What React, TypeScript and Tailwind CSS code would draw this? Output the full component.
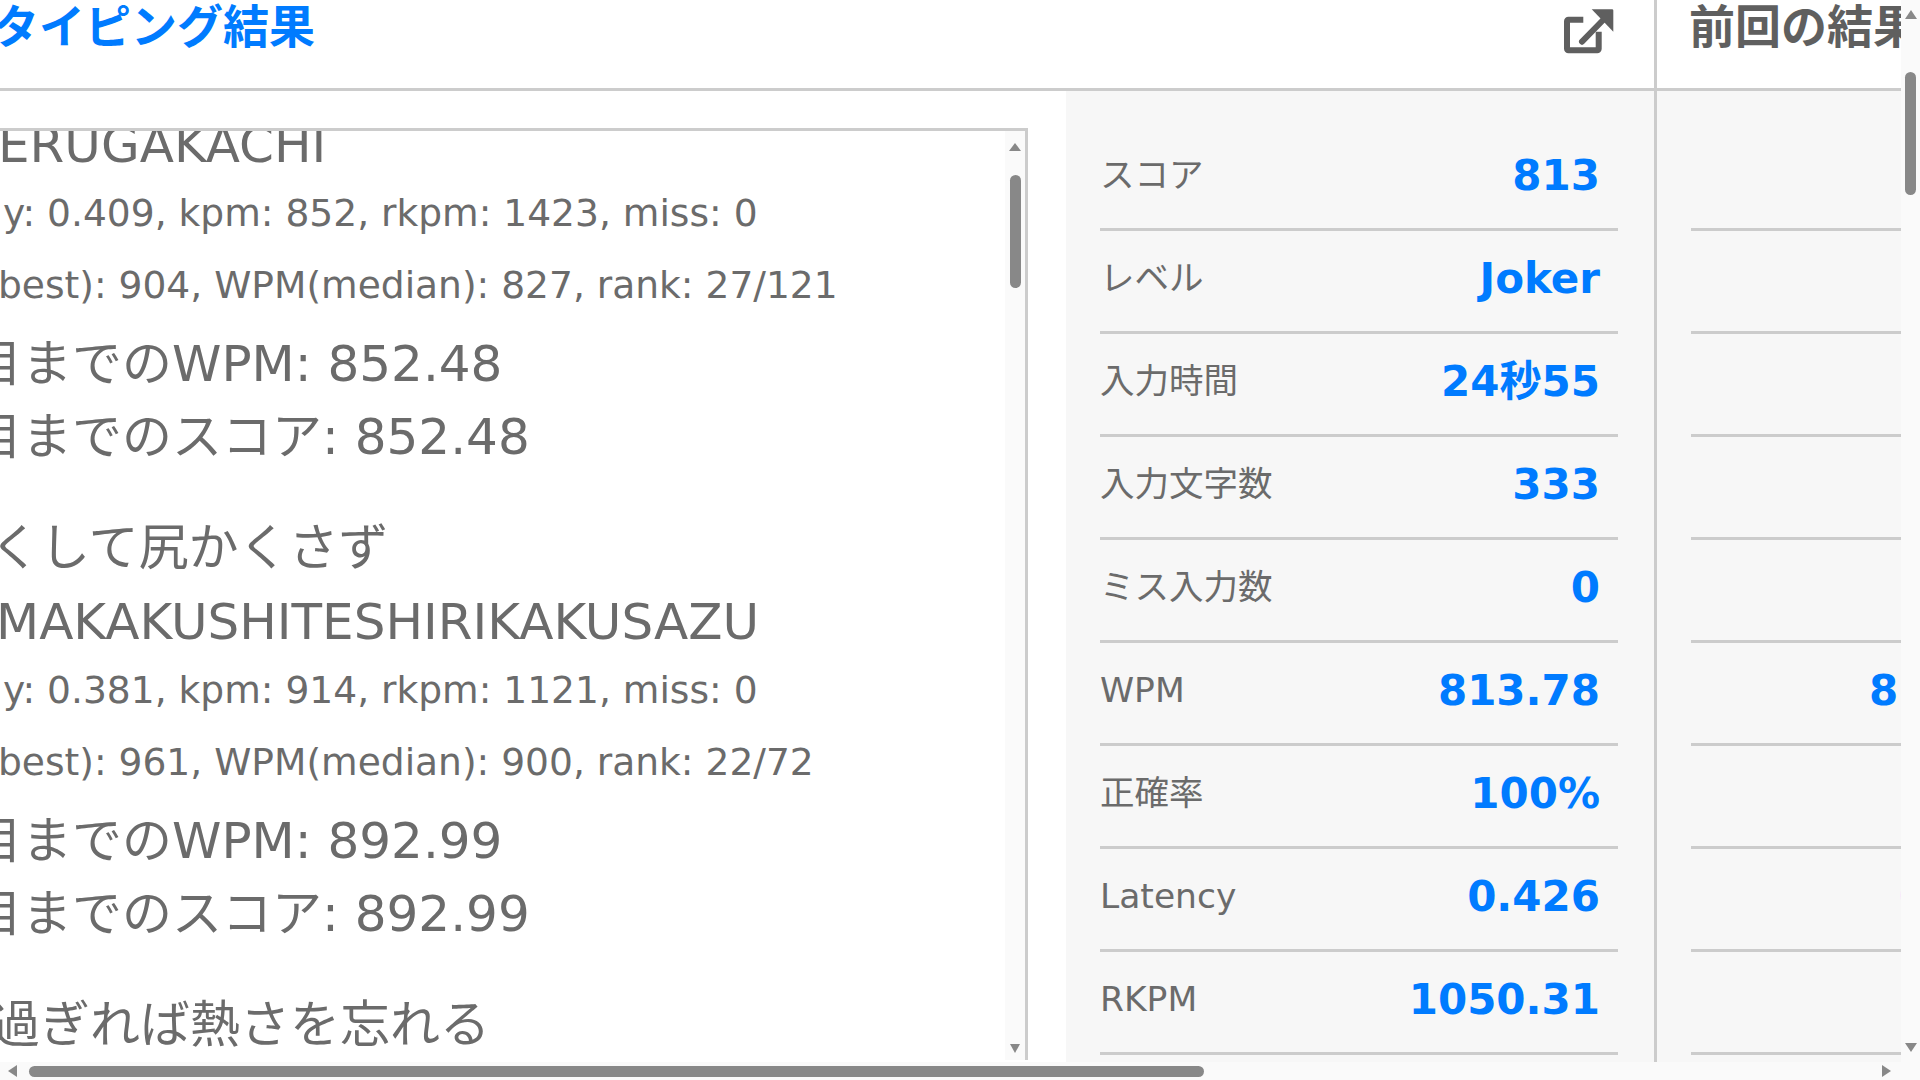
const jp = "font-['DejaVu_Sans','Noto_Sans_CJK_JP',sans-serif]"

const blocks = [
  {
    kana: '',
    roman: 'ERUGAKACHI',
    stat: 'y: 0.409, kpm: 852, rkpm: 1423, miss: 0',
    best: 'best): 904, WPM(median): 827, rank: 27/121',
    wpm: '目までのWPM: 852.48',
    score: '目までのスコア: 852.48',
  },
  {
    kana: 'くして尻かくさず',
    roman: 'MAKAKUSHITESHIRIKAKUSAZU',
    stat: 'y: 0.381, kpm: 914, rkpm: 1121, miss: 0',
    best: 'best): 961, WPM(median): 900, rank: 22/72',
    wpm: '目までのWPM: 892.99',
    score: '目までのスコア: 892.99',
  },
]

const stats = [
  ['スコア', '813'],
  ['レベル', 'Joker'],
  ['入力時間', '24秒55'],
  ['入力文字数', '333'],
  ['ミス入力数', '0'],
  ['WPM', '813.78'],
  ['正確率', '100%'],
  ['Latency', '0.426'],
  ['RKPM', '1050.31'],
]

function ExternalIcon() {
  return (
    <svg width="52" height="46" viewBox="0 0 52 46" fill="none" className="text-[#5f5f5f]">
      <path d="M19.300 10.700H4.500a1.500 1.500 0 0 0-1.500 1.500V39.800a1.500 1.500 0 0 0 1.500 1.500h28.700a1.500 1.500 0 0 0 1.500-1.500V22.700" stroke="currentColor" strokeWidth="6" />
      <path d="M18 32.700L43 7" stroke="currentColor" strokeWidth="6" strokeLinecap="round" />
      <path d="M27.700 .3H48a1.300 1.300 0 0 1 1.300 1.300V22.700z" fill="currentColor" />
    </svg>
  )
}

function StatRow({ label, value }: { label: string; value: string }) {
  return (
    <div className="flex h-[103px] items-center justify-between border-b-[3px] border-[#cccccc] pb-[4px] pr-[18px]">
      <span className="text-[34.5px] text-[#6b6b6b]">{label}</span>
      <span className="text-[42px] font-bold leading-none text-[#007bff]">{value}</span>
    </div>
  )
}

function PrevRow({ value, offset }: { value?: string; offset?: string }) {
  return (
    <div className="flex h-[103px] items-center overflow-hidden border-b-[3px] border-[#cccccc] pb-[4px]">
      {value && <span className={`${offset} whitespace-nowrap text-[42px] font-bold leading-none text-[#007bff]`}>{value}</span>}
    </div>
  )
}

export default function App() {
  return (
    <div className={`flex h-[1080px] w-[1920px] flex-col overflow-hidden bg-white ${jp}`}>
      <div className="flex h-[1062px] min-h-0">
        <main className="flex min-w-0 flex-1 flex-col overflow-hidden">
          <div className="flex h-[91px] shrink-0">
            <section className="flex w-[1654px] justify-between border-b-[3px] border-[#cccccc] pr-[38px]">
              <h1 className="-ml-[7px] text-[46px] font-bold leading-[54px] text-[#007bff]">タイピング結果</h1>
              <div className="pt-[9px]">
                <ExternalIcon />
              </div>
            </section>
            <div className="w-[3px] bg-[#cccccc]" />
            <section className="flex-1 overflow-hidden border-b-[3px] border-[#cccccc] pl-[32px]">
              <h2 className="whitespace-nowrap text-[46px] font-bold leading-[54px] text-[#5f5f5f]">前回の結果</h2>
            </section>
          </div>

          <div className="flex min-h-0 flex-1">
            <div className="flex w-[1066px] shrink-0 pb-[2px] pr-[38px] pt-[37px]">
              <div className="relative flex min-w-0 flex-1 overflow-hidden border-t-[3px] border-r-[3px] border-[#cccccc]">
                <div className="min-w-0 flex-1 overflow-hidden text-[#6b6b6b]">
                  {blocks.map((b) => (
                    <div key={b.roman} className="whitespace-nowrap">
                      {b.kana && <div className="-ml-[10px] mt-[36px] h-[75px] text-[50px] leading-[75px]">{b.kana}</div>}
                      <div className={`h-[75px] text-[50px] leading-[73px] ${b.kana ? '-ml-[4px]' : '-ml-[2px] -mt-[22px]'}`}>{b.roman}</div>
                      <div className="ml-[3px] h-[60px] text-[37.6px] leading-[58px]">{b.stat}</div>
                      <div className="-ml-[2px] mt-[12px] h-[60px] text-[37.6px] leading-[58px]">{b.best}</div>
                      <div className="-ml-[28px] mt-[11px] h-[74px] text-[50px] leading-[74px]">{b.wpm}</div>
                      <div className="-ml-[28px] h-[74px] text-[50px] leading-[73px]">{b.score}</div>
                    </div>
                  ))}
                  <div className="-ml-[10px] mt-[36px] h-[75px] whitespace-nowrap text-[50px] leading-[75px]">過ぎれば熱さを忘れる</div>
                </div>
                <div className="relative w-[20px] shrink-0 bg-[#fafafa]">
                  <div className="mx-auto mt-[12px] h-0 w-0 border-x-[6px] border-b-[8px] border-x-transparent border-b-[#888888]" />
                  <div className="mx-auto mt-[24px] h-[113px] w-[11px] rounded-full bg-[#888888]" />
                  <div className="absolute bottom-[7px] left-[5px] h-0 w-0 border-x-[5px] border-t-[9px] border-x-transparent border-t-[#888888]" />
                </div>
              </div>
            </div>

            <div className="w-[588px] shrink-0 bg-[#f7f7f7] pl-[34px] pr-[36px] pt-[37px]">
              {stats.map(([label, value]) => (
                <StatRow key={label} label={label} value={value} />
              ))}
            </div>
            <div className="w-[3px] bg-[#cccccc]" />
            <div className="flex-1 overflow-hidden bg-[#f7f7f7] pl-[34px] pt-[37px]">
              {stats.map(([label]) => {
                if (label === 'WPM') return <PrevRow key={label} value="8" offset="ml-[178px]" />
                if (label === 'Latency') return <PrevRow key={label} value="0" offset="ml-[208px]" />
                return <PrevRow key={label} />
              })}
            </div>
          </div>
        </main>

        <aside className="flex w-[19px] shrink-0 flex-col items-center bg-[#fafafa]">
          <div className="mt-[10px] h-0 w-0 border-x-[6px] border-b-[9px] border-x-transparent border-b-[#888888]" />
          <div className="mt-[53px] h-[123px] w-[11px] rounded-full bg-[#888888]" />
          <div className="mb-[10px] mt-auto h-0 w-0 border-x-[6px] border-t-[9px] border-x-transparent border-t-[#888888]" />
        </aside>
      </div>

      <div className="flex h-[18px] shrink-0 items-center bg-[#fafafa] pl-[8px]">
        <div className="h-0 w-0 border-y-[6px] border-r-[9px] border-y-transparent border-r-[#888888]" />
        <div className="ml-[12px] h-[11px] w-[1175px] rounded-full bg-[#888888]" />
        <div className="ml-[678px] h-0 w-0 border-y-[6px] border-l-[9px] border-y-transparent border-l-[#888888]" />
      </div>
    </div>
  )
}
